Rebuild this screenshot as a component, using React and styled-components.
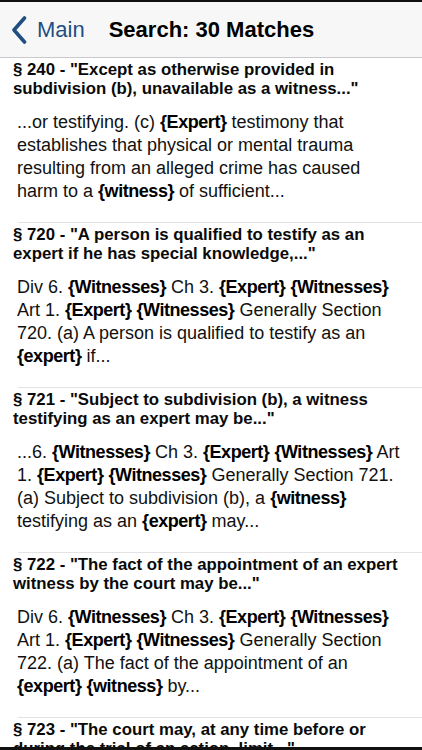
import React from "react";
import styled, { createGlobalStyle } from "styled-components";

const GlobalStyle = createGlobalStyle`
  html, body {
    margin: 0;
    padding: 0;
    background: #fff;
  }
  body {
    font-family: "Liberation Sans", Arial, Helvetica, sans-serif;
    color: #000;
    -webkit-font-smoothing: antialiased;
  }
`;

const Screen = styled.div`
  width: 422px;
  height: 750px;
  display: flex;
  flex-direction: column;
  overflow: hidden;
  background: #fff;
`;

const TopStrip = styled.div`
  height: 2px;
  flex: none;
  background: #111;
`;

const BottomStrip = styled.div`
  height: 3px;
  flex: none;
  background: #111;
`;

const NavBar = styled.div`
  flex: none;
  height: 55px;
  display: flex;
  align-items: center;
  background: #f7f7f8;
  border-bottom: 1px solid #c9c9cc;
`;

const BackButton = styled.div`
  display: flex;
  align-items: center;
  gap: 10px;
  padding-left: 11px;
  color: #1f4f82;
  font-size: 22px;
  margin-top: 1px;
`;

const NavTitle = styled.div`
  margin-left: 24px;
  font-size: 22px;
  font-weight: 700;
  margin-top: 1px;
`;

const List = styled.div`
  flex: 1;
  overflow: hidden;
`;

const Cell = styled.div`
  padding: 2px 0 19px;
  border-bottom: 1px solid #e3e3e5;
  margin-left: ${(p) => p.$inset}px;
`;

const CellInner = styled.div`
  margin-left: -${(p) => p.$inset}px;
`;

const Title = styled.div`
  padding-left: 13px;
  font-size: 16.8px;
  line-height: 19px;
  font-weight: 700;
  white-space: nowrap;
  color: #0a0a0a;
`;

const Body = styled.div`
  margin-top: 13px;
  padding-left: 17px;
  font-size: 18px;
  line-height: 23px;
  white-space: nowrap;
  color: #111;
`;

const Term = styled.b`
  font-weight: 700;
  letter-spacing: -0.45px;
  color: #000;
`;

const Chevron = () => (
  <svg width="16" height="28" viewBox="0 0 16 28">
    <path
      d="M13.5 2 L3 14 L13.5 26"
      fill="none"
      stroke="#1f4f82"
      strokeWidth="3.6"
      strokeLinecap="round"
      strokeLinejoin="round"
    />
  </svg>
);

const results = [
  {
    title: ['§ 240 - "Except as otherwise provided in', 'subdivision (b), unavailable as a witness..."'],
    body: [
      "...or testifying. (c) {Expert} testimony that",
      "establishes that physical or mental trauma",
      "resulting from an alleged crime has caused",
      "harm to a {witness} of sufficient...",
    ],
  },
  {
    title: ['§ 720 - "A person is qualified to testify as an', 'expert if he has special knowledge,..."'],
    body: [
      "Div 6. {Witnesses} Ch 3. {Expert} {Witnesses}",
      "Art 1. {Expert} {Witnesses} Generally Section",
      "720. (a) A person is qualified to testify as an",
      "{expert} if...",
    ],
  },
  {
    title: ['§ 721 - "Subject to subdivision (b), a witness', 'testifying as an expert may be..."'],
    body: [
      "...6. {Witnesses} Ch 3. {Expert} {Witnesses} Art",
      "1. {Expert} {Witnesses} Generally Section 721.",
      "(a) Subject to subdivision (b), a {witness}",
      "testifying as an {expert} may...",
    ],
  },
  {
    title: ['§ 722 - "The fact of the appointment of an expert', 'witness by the court may be..."'],
    body: [
      "Div 6. {Witnesses} Ch 3. {Expert} {Witnesses}",
      "Art 1. {Expert} {Witnesses} Generally Section",
      "722. (a) The fact of the appointment of an",
      "{expert} {witness} by...",
    ],
  },
  {
    title: ['§ 723 - "The court may, at any time before or', 'during the trial of an action, limit..."'],
    body: [],
  },
];

const renderLine = (line) =>
  line.split(/(\{[^}]+\})/).map((part, i) =>
    part.startsWith("{") ? <Term key={i}>{part}</Term> : <React.Fragment key={i}>{part}</React.Fragment>
  );

const App = () => {
  return (
    <Screen>
      <GlobalStyle />
      <TopStrip />
      <NavBar>
        <BackButton>
          <Chevron />
          <span>Main</span>
        </BackButton>
        <NavTitle>Search: 30 Matches</NavTitle>
      </NavBar>
      <List>
        {results.map((r, idx) => (
          <Cell key={idx} $inset={18}>
            <CellInner $inset={18}>
              <Title>
                {r.title.map((t, i) => (
                  <div key={i}>{t}</div>
                ))}
              </Title>
              {r.body.length > 0 && (
                <Body>
                  {r.body.map((l, i) => (
                    <div key={i}>{renderLine(l)}</div>
                  ))}
                </Body>
              )}
            </CellInner>
          </Cell>
        ))}
      </List>
      <BottomStrip />
    </Screen>
  );
};

export default App;
